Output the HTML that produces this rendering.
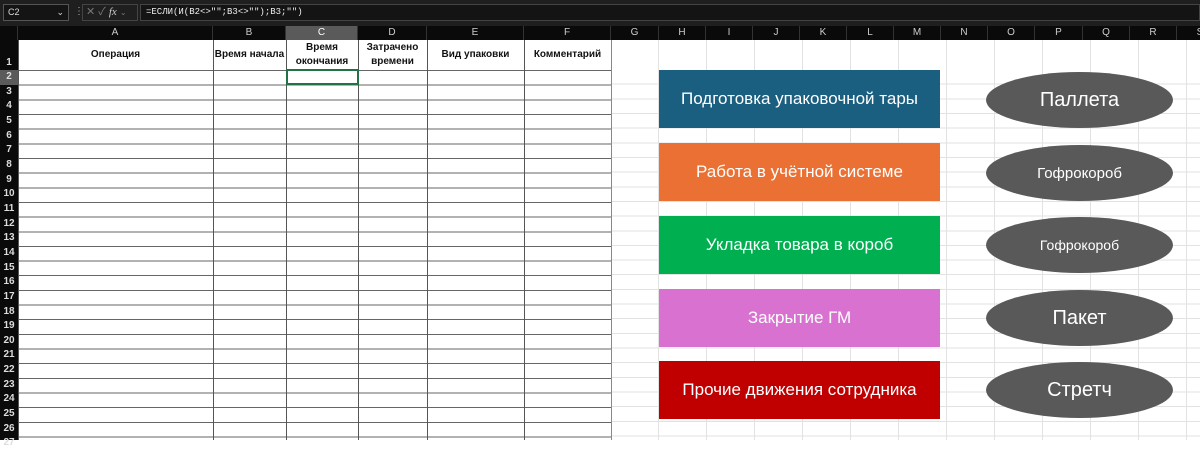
<!DOCTYPE html>
<html><head><meta charset="utf-8"><style>
*{margin:0;padding:0;box-sizing:border-box}
body{width:1200px;height:440px;overflow:hidden;background:#fff;font-family:"Liberation Sans","Noto Sans CJK SC",sans-serif;position:relative}
.a{position:absolute}
#top{left:0;top:0;width:1200px;height:26px;background:#1f1f1f}
#colh{left:0;top:26px;width:1200px;height:14px;background:#0a0a0a;color:#ccc;font-size:10px}
.ch{position:absolute;top:0;height:14px;line-height:14px;text-align:center;border-right:1px solid #333}
#rowh{left:0;top:40px;width:18px;height:400px;background:#0a0a0a}
#grid{left:611px;top:40px;width:589px;height:400px;
background:repeating-linear-gradient(to bottom,transparent 0,transparent 13.66px,#e2e2e2 13.66px,#e2e2e2 14.66px) 0 30px/100% 100% no-repeat,
repeating-linear-gradient(to right,transparent 0,transparent 47px,#e2e2e2 47px,#e2e2e2 48px)}
#tbl{left:18px;top:70px;width:593px;height:370px;
background:repeating-linear-gradient(to bottom,#666 0,#666 1px,transparent 1px,transparent 14.66px)}
.vl{position:absolute;top:40px;width:1px;height:400px;background:#555}
.hd{position:absolute;top:40px;height:30px;font-size:10px;font-weight:bold;display:flex;align-items:center;justify-content:center;text-align:center;line-height:14px;color:#111}
.box{position:absolute;left:659px;width:281px;height:58px;color:#fff;font-size:17px;display:flex;align-items:center;justify-content:center}
.el{position:absolute;left:986px;width:187px;height:56px;border-radius:50%;background:#595959;color:#fff;display:flex;align-items:center;justify-content:center}
</style></head><body>
<div id="top" class="a">
 <div class="a" style="left:3px;top:4px;width:66px;height:17px;border:1px solid #555;background:#141414;color:#ddd;font-size:9px;line-height:15px;padding-left:4px">C2<span style="position:absolute;right:4px">⌄</span></div>
 <div class="a" style="left:74px;top:6px;color:#aaa;font-size:10px">⋮</div>
 <div class="a" style="left:82px;top:4px;width:56px;height:17px;border:1px solid #444;color:#777;font-size:11px;line-height:15px;padding-left:3px">✕ ✓ <i style="font-family:'Liberation Serif',serif;color:#ccc">fx</i> <span style="font-size:8px">⌄</span></div>
 <div class="a" style="left:140px;top:4px;width:1060px;height:17px;border:1px solid #444;background:#141414;color:#eee;font-size:9px;line-height:15px;padding-left:5px;font-family:'Liberation Mono',monospace">=ЕСЛИ(И(B2&lt;&gt;"";B3&lt;&gt;"");B3;"")</div>
</div>
<div id="colh" class="a">
 <div class="ch" style="left:0;width:18px"></div>
 <div class="ch" style="left:18px;width:195px">A</div>
 <div class="ch" style="left:213px;width:73px">B</div>
 <div class="ch" style="left:286px;width:72px;background:#5a5a5a;color:#fff">C</div>
 <div class="ch" style="left:358px;width:69px">D</div>
 <div class="ch" style="left:427px;width:97px">E</div>
 <div class="ch" style="left:524px;width:87px">F</div>
 <div class="ch" style="left:611px;width:48px">G</div>
 <div class="ch" style="left:659px;width:47px">H</div>
 <div class="ch" style="left:706px;width:47px">I</div>
 <div class="ch" style="left:753px;width:47px">J</div>
 <div class="ch" style="left:800px;width:47px">K</div>
 <div class="ch" style="left:847px;width:47px">L</div>
 <div class="ch" style="left:894px;width:47px">M</div>
 <div class="ch" style="left:941px;width:47px">N</div>
 <div class="ch" style="left:988px;width:47px">O</div>
 <div class="ch" style="left:1035px;width:48px">P</div>
 <div class="ch" style="left:1083px;width:47px">Q</div>
 <div class="ch" style="left:1130px;width:47px">R</div>
 <div class="ch" style="left:1177px;width:47px">S</div>
</div>
<div id="grid" class="a"></div>
<div id="tbl" class="a"></div>
<div class="vl" style="left:18px"></div>
<div class="vl" style="left:213px"></div>
<div class="vl" style="left:286px"></div>
<div class="vl" style="left:358px"></div>
<div class="vl" style="left:427px"></div>
<div class="vl" style="left:524px"></div>
<div class="vl" style="left:611px;background:#888"></div>
<div class="hd" style="left:18px;width:195px">Операция</div>
<div class="hd" style="left:213px;width:73px">Время начала</div>
<div class="hd" style="left:286px;width:72px">Время<br>окончания</div>
<div class="hd" style="left:358px;width:69px">Затрачено<br>времени</div>
<div class="hd" style="left:427px;width:97px">Вид упаковки</div>
<div class="hd" style="left:524px;width:87px">Комментарий</div>
<div class="a" style="left:286px;top:69px;width:73px;height:16px;border:2px solid #217346"></div>
<div id="rowh" class="a"></div>
<div class="a" style="left:0;top:70px;width:18px;height:15px;background:#5a5a5a"></div>
<div class="a" style="left:0;top:56px;width:18px;font-size:10px;font-weight:bold;color:#ddd;text-align:center;line-height:14px">1</div>
<div class="a" style="left:0;top:70px;width:18px;font-size:10px;font-weight:bold;color:#ddd;text-align:center;line-height:14.66px">2<br>3<br>4<br>5<br>6<br>7<br>8<br>9<br>10<br>11<br>12<br>13<br>14<br>15<br>16<br>17<br>18<br>19<br>20<br>21<br>22<br>23<br>24<br>25<br>26<br>27</div>
<div class="box" style="top:70px;background:#1a5e80">Подготовка упаковочной тары</div>
<div class="box" style="top:143px;background:#ea7033">Работа в учётной системе</div>
<div class="box" style="top:216px;background:#00b050">Укладка товара в короб</div>
<div class="box" style="top:289px;background:#d871cf">Закрытие ГМ</div>
<div class="box" style="top:361px;background:#c00000">Прочие движения сотрудника</div>
<div class="el" style="top:72px;font-size:20px">Паллета</div>
<div class="el" style="top:145px;font-size:15px">Гофрокороб</div>
<div class="el" style="top:217px;font-size:14px">Гофрокороб</div>
<div class="el" style="top:290px;font-size:20px">Пакет</div>
<div class="el" style="top:362px;font-size:20px">Стретч</div>
</body></html>
